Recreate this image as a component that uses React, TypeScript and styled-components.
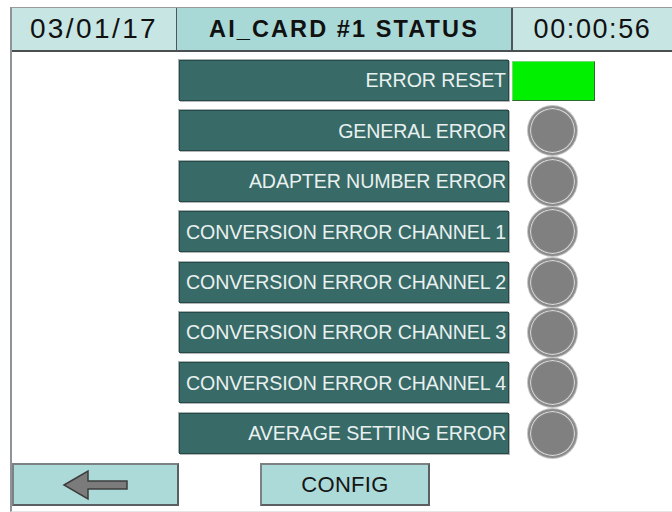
import React from "react";
import styled, { createGlobalStyle } from "styled-components";

const Global = createGlobalStyle`
  html, body { margin: 0; padding: 0; background: #ffffff; }
  body { font-family: "Liberation Sans", Arial, sans-serif; }
  * { box-sizing: border-box; }
`;

const Screen = styled.div`
  width: 672px;
  height: 512px;
  padding: 7px 0 0 10px;
  background: #ffffff;
  overflow: hidden;
`;

const Frame = styled.div`
  height: 505px;
  border-left: 2px solid #8e9398;
  border-top: 1px solid #9a9a9a;
  border-bottom: 1px solid #e6e6e6;
  display: flex;
  flex-direction: column;
`;

const Header = styled.div`
  display: grid;
  grid-template-columns: 164px 337px 1fr;
  height: 44px;
  border-bottom: 2px solid #4a4f52;
`;

const HeaderCell = styled.div<{ $strong?: boolean; $size: number; $ls: number }>`
  display: flex;
  align-items: center;
  justify-content: center;
  background: ${(p) => (p.$strong ? "#a9d9d7" : "#c6e5e3")};
  border-right: ${(p) => (p.$strong ? "2px solid #4f5558" : "none")};
  border-left: ${(p) => (p.$strong ? "1px solid #4f5558" : "none")};
  color: #111;
  font-size: ${(p) => p.$size}px;
  font-weight: ${(p) => (p.$strong ? 700 : 400)};
  letter-spacing: ${(p) => p.$ls}px;
  padding-top: 1px;
`;

const Body = styled.div`
  flex: 1;
  display: flex;
  flex-direction: column;
  padding: 8px 0 0 167px;
`;

const Row = styled.div`
  height: 50.4px;
  display: flex;
  align-items: flex-start;
  gap: 3px;
`;

const Bar = styled.div`
  width: 330px;
  height: 41px;
  background: #386a67;
  border: 1px solid #26494a;
  box-shadow: -1px -1px 0 #a9b3b2, 1px 1px 0 #b5b5b5;
  color: #e9f1f0;
  font-size: 19.6px;
  letter-spacing: -0.1px;
  display: flex;
  align-items: center;
  justify-content: flex-end;
  padding: 1px 2px 0 0;
  white-space: nowrap;
`;

const Indicator = styled.div`
  width: 83px;
  height: 41px;
  display: flex;
  align-items: center;
  justify-content: center;
`;

const GreenBox = styled.div`
  width: 83px;
  height: 40px;
  margin-top: 1px;
  background: #00f000;
  border: 1px solid #2f6a2f;
  border-top-color: #6fdc6f;
  border-left-color: #6fdc6f;
`;

const Lamp = styled.div`
  width: 49px;
  height: 49px;
  flex: none;
  border-radius: 50%;
  background: #808080;
  border: 2px solid #8c8c8c;
  box-shadow: inset 0 0 0 1px #dcdcdc, inset 0 0 0 2px #8a8a8a, 0 0 0 1px #c4c4c4;
  margin-left: -3px;
`;

const Footer = styled.div`
  height: 48px;
  display: flex;
  align-items: flex-start;
  gap: 81px;
`;

const FooterButton = styled.div<{ $w: number }>`
  width: ${(p) => p.$w}px;
  height: 43px;
  background: #acdad8;
  border: 2px solid #5b5f61;
  border-top-color: #7c8284;
  border-left-color: #7c8284;
  display: flex;
  align-items: center;
  justify-content: center;
  color: #151515;
  font-size: 22px;
  letter-spacing: 0.3px;
`;

const rows = [
  "GENERAL ERROR",
  "ADAPTER NUMBER ERROR",
  "CONVERSION ERROR CHANNEL 1",
  "CONVERSION ERROR CHANNEL 2",
  "CONVERSION ERROR CHANNEL 3",
  "CONVERSION ERROR CHANNEL 4",
  "AVERAGE SETTING ERROR",
];

const BackArrow = () => (
  <svg width="68" height="32" viewBox="0 0 68 32">
    <path
      d="M2 16 L26 2 L26 12 L65 12 L65 20 L26 20 L26 30 Z"
      fill="#7b7b7b"
      stroke="#3e3e3e"
      strokeWidth="1.5"
      strokeLinejoin="miter"
    />
  </svg>
);

export default function App() {
  return (
    <>
      <Global />
      <Screen>
        <Frame>
          <Header>
            <HeaderCell $size={28} $ls={2.4}>03/01/17</HeaderCell>
            <HeaderCell $strong $size={23.5} $ls={2.1}>AI_CARD #1 STATUS</HeaderCell>
            <HeaderCell $size={27} $ls={1.6}>00:00:56</HeaderCell>
          </Header>
          <Body>
            <Row>
              <Bar>ERROR RESET</Bar>
              <Indicator>
                <GreenBox />
              </Indicator>
            </Row>
            {rows.map((r) => (
              <Row key={r}>
                <Bar>{r}</Bar>
                <Indicator>
                  <Lamp />
                </Indicator>
              </Row>
            ))}
          </Body>
          <Footer>
            <FooterButton $w={167}>
              <BackArrow />
            </FooterButton>
            <FooterButton $w={170}>CONFIG</FooterButton>
          </Footer>
        </Frame>
      </Screen>
    </>
  );
}
